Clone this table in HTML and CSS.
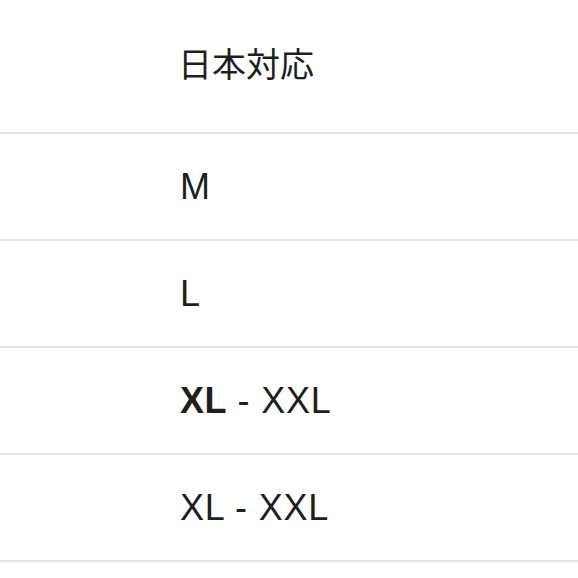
FILE: index.html
```html
<!DOCTYPE html>
<html lang="ja">
<head>
<meta charset="utf-8">
<link rel="stylesheet" href="styles.css">
</head>
<body>
<div class="table">
  <div class="row head"><div class="c1"></div><div class="c2">日本対応</div></div>
  <div class="row"><div class="c1"></div><div class="c2">M</div></div>
  <div class="row"><div class="c1"></div><div class="c2">L</div></div>
  <div class="row"><div class="c1"></div><div class="c2"><b>XL</b> - XXL</div></div>
  <div class="row"><div class="c1"></div><div class="c2">XL - XXL</div></div>
</div>
</body>
</html>
```
FILE: styles.css
```css
html, body {
  margin: 0;
  padding: 0;
  background: #fff;
}
body {
  font-family: "Liberation Sans", "Noto Sans CJK JP", sans-serif;
  color: #1e1e1e;
  font-size: 36px;
}
.table {
  display: flex;
  flex-direction: column;
}
.row {
  display: flex;
  align-items: center;
  height: 105px;
  border-bottom: 2px solid #e4e4e4;
}
.row.head {
  height: 132px;
  align-items: flex-start;
}
.head .c2 {
  padding-top: 48px;
  line-height: 1;
  font-size: 34px;
  letter-spacing: 0;
  margin-left: -2px;
}
.c1 {
  width: 180px;
  flex: none;
}
.c2 {
  line-height: 1;
  letter-spacing: 0.8px;
}
.c2 b {
  font-weight: 700;
  letter-spacing: 0.4px;
}
```
